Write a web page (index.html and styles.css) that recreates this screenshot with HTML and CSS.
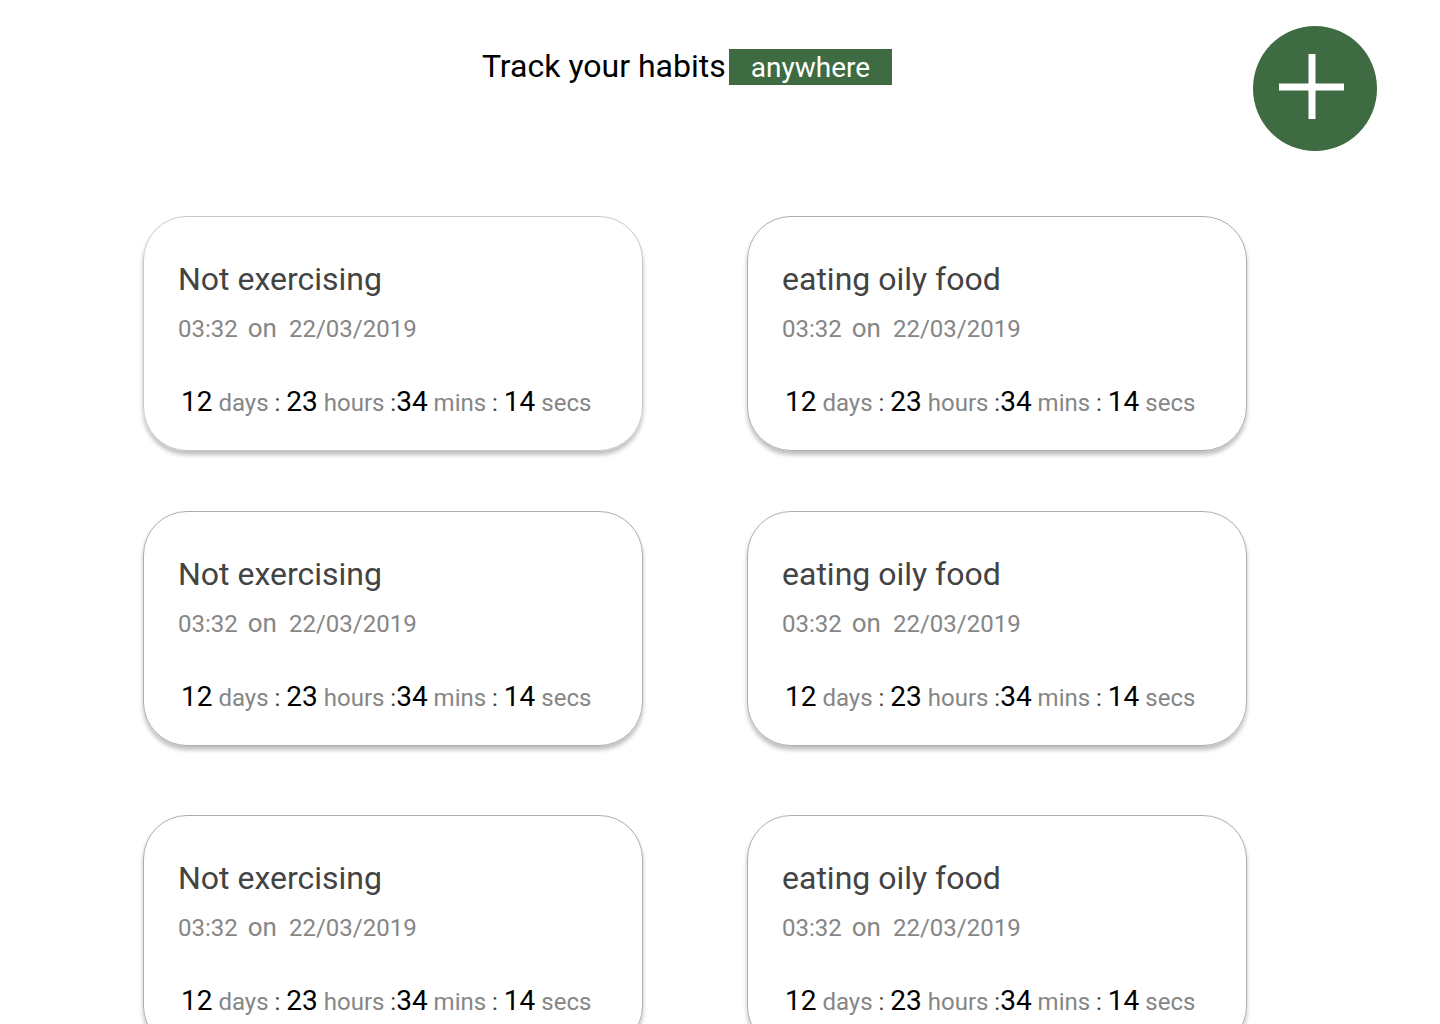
FILE: index.html
```html
<!DOCTYPE html>
<html lang="en">
<head>
<meta charset="utf-8">
<meta name="viewport" content="width=device-width, initial-scale=1">
<title>Track your habits anywhere</title>
<link rel="stylesheet" href="styles.css">
</head>
<body>
<header class="header">
  <h1 class="title">Track your habits<span class="badge">anywhere</span></h1>
  <button class="add" type="button" aria-label="Add habit">
    <svg class="add-icon" viewBox="0 0 65 65" aria-hidden="true"><path d="M0 33H65M33 0V65" stroke="currentColor" stroke-width="7" fill="none"/></svg>
  </button>
</header>
<main class="page">
  <section class="habits">
    <article class="card card-light">
      <h2 class="name">Not exercising</h2>
      <p class="since"><span>03:32</span><span class="on">on</span><span>22/03/2019</span></p>
      <p class="timer"><b>12</b> days <i>:</i> <b>23</b> hours <i>:</i><b>34</b> mins <i>:</i> <b>14</b> secs</p>
    </article>
    <article class="card">
      <h2 class="name">eating oily food</h2>
      <p class="since"><span>03:32</span><span class="on">on</span><span>22/03/2019</span></p>
      <p class="timer"><b>12</b> days <i>:</i> <b>23</b> hours <i>:</i><b>34</b> mins <i>:</i> <b>14</b> secs</p>
    </article>
    <article class="card">
      <h2 class="name">Not exercising</h2>
      <p class="since"><span>03:32</span><span class="on">on</span><span>22/03/2019</span></p>
      <p class="timer"><b>12</b> days <i>:</i> <b>23</b> hours <i>:</i><b>34</b> mins <i>:</i> <b>14</b> secs</p>
    </article>
    <article class="card">
      <h2 class="name">eating oily food</h2>
      <p class="since"><span>03:32</span><span class="on">on</span><span>22/03/2019</span></p>
      <p class="timer"><b>12</b> days <i>:</i> <b>23</b> hours <i>:</i><b>34</b> mins <i>:</i> <b>14</b> secs</p>
    </article>
  </section>
  <section class="habits">
    <article class="card">
      <h2 class="name">Not exercising</h2>
      <p class="since"><span>03:32</span><span class="on">on</span><span>22/03/2019</span></p>
      <p class="timer"><b>12</b> days <i>:</i> <b>23</b> hours <i>:</i><b>34</b> mins <i>:</i> <b>14</b> secs</p>
    </article>
    <article class="card">
      <h2 class="name">eating oily food</h2>
      <p class="since"><span>03:32</span><span class="on">on</span><span>22/03/2019</span></p>
      <p class="timer"><b>12</b> days <i>:</i> <b>23</b> hours <i>:</i><b>34</b> mins <i>:</i> <b>14</b> secs</p>
    </article>
  </section>
</main>
</body>
</html>
```
FILE: styles.css
```css
* {
  box-sizing: border-box;
}

html {
  scrollbar-width: none;
}

body {
  margin: 0;
  background: #fff;
  color: #000;
  font-family: Roboto, "Liberation Sans", sans-serif;
}

h1, h2, p {
  margin: 0;
  font-weight: 400;
}

.header {
  display: grid;
  grid-template-columns: 1fr auto 1fr;
  align-items: start;
  padding: 26px 63px 0 0;
}

.title {
  grid-column: 2;
  display: flex;
  align-items: flex-end;
  gap: 3px;
  margin-right: 3px;
  padding-top: 22px;
  font-size: 32px;
  line-height: 37px;
}

.badge {
  padding: 1px 22px 0;
  background: #3e6b42;
  color: #fff;
  font-size: 28px;
  line-height: 35px;
}

.add {
  justify-self: end;
  display: grid;
  place-items: center;
  width: 124px;
  height: 125px;
  padding: 0 7px 4px 0;
  border: 0;
  border-radius: 50%;
  background: #3e6b42;
  color: #fff;
  cursor: pointer;
}

.add-icon {
  width: 65px;
  height: 65px;
}

.page {
  display: grid;
  gap: 69px;
  padding: 65px 193px 65px 143px;
}

.habits {
  display: grid;
  grid-template-columns: 1fr 1fr;
  column-gap: 104px;
  row-gap: 60px;
}

.card {
  padding: 44px 34px 29px;
  border: 1px solid #adadad;
  border-radius: 44px;
  box-shadow: 0 4px 4px rgba(0, 0, 0, 0.25);
}

.card-light {
  border-color: #c8c8c8;
}

.name {
  color: #434343;
  font-size: 32px;
  line-height: 36px;
}

.since {
  display: flex;
  align-items: baseline;
  margin-top: 15px;
  color: #868686;
  font-size: 24px;
  line-height: 32px;
}

.on {
  margin: 0 12px 0 10px;
  font-size: 26px;
}

.timer {
  margin-top: 39px;
  padding-left: 3px;
  color: #868686;
  font-size: 24px;
  line-height: 36px;
  white-space: nowrap;
}

.timer b {
  color: #000;
  font-size: 28px;
  font-weight: 400;
}

.timer i {
  color: #434343;
  font-style: normal;
}
```
